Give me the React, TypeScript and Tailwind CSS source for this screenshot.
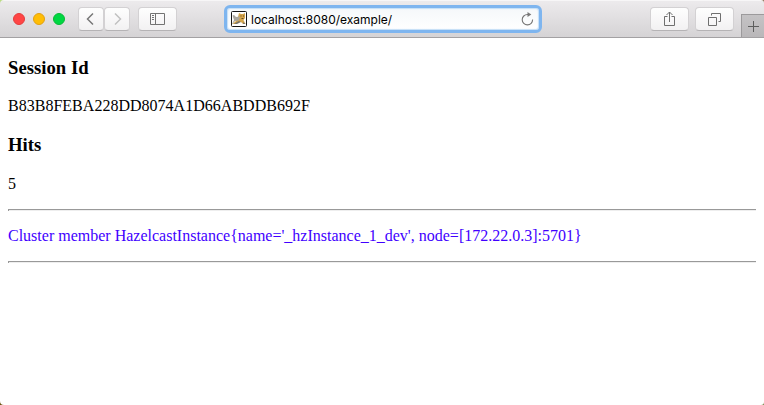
import type { ReactNode } from 'react';

function ToolButton({ className, children }: { className: string; children: ReactNode }) {
  return (
    <button
      className={`flex h-[24px] shrink-0 items-center justify-center rounded-[4px] border border-[#d3d1d3] border-b-[#b5b3b5] bg-linear-to-b from-[#fefefe] to-[#f2f1f2] ${className}`}
    >
      {children}
    </button>
  );
}

function Favicon() {
  return (
    <svg width="16" height="16" viewBox="0 0 16 16" className="shrink-0">
      <rect x=".5" y=".5" width="15" height="15" rx="1" fill="#fff" stroke="#171717" />
      <path d="M7 6 8 2l2 1h2l2-1v5l-1.5 2 2 4H12l-2-2H7l-3 2H1.5L5 10z" fill="#d5a64c" />
      <path d="M1.5 4.5 3 4l2 2 4-.5-1 4-4 .5-2.5 3H1l2-4z" fill="#aaa69d" />
      <path d="m8 10 2 1-4 2H3l3-2zM12 11l2.5 2H12z" fill="#77736b" />
      <path d="M9.5 5h1M12 5h1M10.5 7.5h2" stroke="#6b4a20" />
    </svg>
  );
}

function Toolbar() {
  return (
    <header className="flex h-[38px] border-b border-[#a3a1a3] bg-linear-to-b from-[#edebed] to-[#d5d3d5] pl-[13px] shadow-[inset_0_1px_0_#f7f6f7]">
      <div className="flex h-[38px] shrink-0 items-center gap-2">
        <span className="size-3 rounded-full border border-[#e33d3d] bg-[#ff4545]" />
        <span className="size-3 rounded-full border border-[#e2a012] bg-[#ffbd05]" />
        <span className="size-3 rounded-full border border-[#08b936] bg-[#00d742]" />
      </div>
      <div className="ml-[13px] mt-[7px] flex shrink-0">
        <ToolButton className="w-[26px]">
          <svg width="8" height="14" viewBox="0 0 8 14" fill="none" stroke="#777" strokeWidth="1.5" className="-ml-0.5">
            <path d="M7 1.5 1.5 7 7 12.5" />
          </svg>
        </ToolButton>
        <ToolButton className="w-[26px]">
          <svg width="8" height="14" viewBox="0 0 8 14" fill="none" stroke="#c1c1c1" strokeWidth="1.5" className="ml-0.5">
            <path d="M1 1.5 6.5 7 1 12.5" />
          </svg>
        </ToolButton>
      </div>
      <ToolButton className="ml-2 mt-[7px] w-[39px]">
        <svg width="15" height="12" viewBox="0 0 15 12" fill="none" stroke="#737373">
          <path d="M.5 .5h14v11H.5zM5.5 1v10M2 2.5h2M2 4.5h2M2 6.5h2" />
        </svg>
      </ToolButton>
      <div className="ml-[47px] mt-[5px] flex h-[28px] w-[318px] shrink-0 items-center rounded-[6px] border-[3px] border-[#7eb5ef] bg-linear-to-b from-[#f5f8fa] to-white pl-[4px] pr-[5px] shadow-[inset_0_0_1px_1px_#c4def7]">
        <Favicon />
        <span className="ml-1 whitespace-nowrap pt-px font-['Inter','Liberation_Sans',sans-serif] text-[12px] leading-4 text-black">
          localhost:8080/example/
        </span>
        <svg width="13" height="14" viewBox="0 0 13 14" className="ml-auto shrink-0" fill="none" stroke="#777" strokeWidth="1.1">
          <path d="M11.6 7.5A5.2 5.2 0 1 1 6.5 2.5h2" />
          <path d="m6.5 0 3.8 2.5-3.8 2.4z" fill="#777" stroke="none" />
        </svg>
      </div>
      <ToolButton className="ml-[108px] mt-[7px] w-[39px]">
        <svg width="11" height="16" viewBox="0 0 11 16" fill="none" stroke="#6f6f6f">
          <path d="M3.5 5.5h-3v9h10v-9h-3M5.5 11V1M2.5 4l3-3 3 3" />
        </svg>
      </ToolButton>
      <ToolButton className="ml-[6px] mt-[7px] w-[39px]">
        <svg width="13" height="13" viewBox="0 0 13 13" fill="none" stroke="#6f6f6f">
          <path d="M.5 4.5h8v8h-8zM3.5 2.5v-2h9v8h-2" />
        </svg>
      </ToolButton>
      <button className="ml-[7px] mt-[14px] flex h-[23px] w-[23px] shrink-0 items-center justify-center border-l border-t border-[#9c9a9c] bg-linear-to-b from-[#c4c2c4] to-[#b9b7b9]">
        <svg width="11" height="11" viewBox="0 0 11 11" stroke="#5d5d5d" className="ml-px">
          <path d="M0 5.5h11M5.5 0v11" />
        </svg>
      </button>
    </header>
  );
}

function DesktopCorners() {
  return (
    <svg width="764" height="405" viewBox="0 0 764 405" className="pointer-events-none absolute left-0 top-0">
      <path d="M0 0h4Q0 0 0 4z" fill="#b9dc83" />
      <path d="M764 0h-3q3 0 3 3z" fill="#8a7358" />
      <path d="M0 405h4q-4 0-4-4z" fill="#6b5310" />
      <path d="M764 405h-3q3 0 3-3z" fill="#7d8a50" />
    </svg>
  );
}

export default function App() {
  return (
    <div className="relative h-[405px] w-[764px] overflow-hidden bg-white">
      <Toolbar />
      <main className="px-2 pt-[19px] font-['Liberation_Serif',serif] text-[16px] leading-[18px] text-black">
        <h3 className="text-[18.72px] font-bold leading-[22px]">Session Id</h3>
        <p className="mt-[18px] tracking-[0.015px]">B83B8FEBA228DD8074A1D66ABDDB692F</p>
        <h3 className="mt-[19px] text-[18.72px] font-bold leading-[22px]">Hits</h3>
        <p className="mt-[19px]">5</p>
        <hr className="mt-[16px] h-[2px] border-0 border-l border-t border-[#999] bg-[#eee]" />
        <p className="mt-4 text-[#4100ff]">
          Cluster member HazelcastInstance{"{name='_hzInstance_1_dev', node=[172.22.0.3]:5701}"}
        </p>
        <hr className="mt-4 h-[2px] border-0 border-l border-t border-[#999] bg-[#eee]" />
      </main>
      <DesktopCorners />
    </div>
  );
}
